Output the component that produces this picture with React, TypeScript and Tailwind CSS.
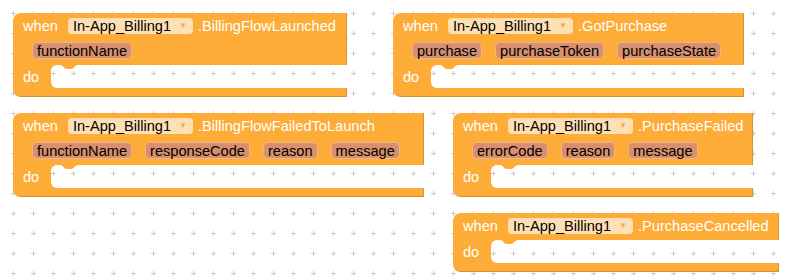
import React from "react";

type EventBlockData = {
  pos: string; // left / top / width, written out in full
  event: string;
  params: string[];
};

const BLOCKS: EventBlockData[] = [
  { pos: "left-[13px] top-[13px] w-[334px]", event: "BillingFlowLaunched", params: ["functionName"] },
  { pos: "left-[393px] top-[13px] w-[351px]", event: "GotPurchase", params: ["purchase", "purchaseToken", "purchaseState"] },
  {
    pos: "left-[13px] top-[113px] w-[411px]",
    event: "BillingFlowFailedToLaunch",
    params: ["functionName", "responseCode", "reason", "message"],
  },
  { pos: "left-[453px] top-[113px] w-[300px]", event: "PurchaseFailed", params: ["errorCode", "reason", "message"] },
  { pos: "left-[453px] top-[213px] w-[326px]", event: "PurchaseCancelled", params: [] },
];

function GridBackground() {
  return (
    <svg className="absolute inset-0" width="789" height="280">
      <defs>
        <pattern id="ws-grid" width="20" height="20" patternUnits="userSpaceOnUse">
          <path d="M11 13.5H16M13.5 11V16" stroke="#cdcdcd" strokeWidth="1" />
        </pattern>
      </defs>
      <rect width="789" height="280" fill="url(#ws-grid)" />
    </svg>
  );
}

function ParamPill({ name }: { name: string }) {
  return (
    <span className="flex h-[17px] items-center rounded-[5px] border-[1.5px] border-[#f0b48c] bg-[#d88f6d] px-[4px] text-black">
      {name}
    </span>
  );
}

function EventBlock({ pos, event, params }: EventBlockData) {
  return (
    <div className={`absolute flex flex-col ${pos}`}>
      {/* header + parameters */}
      <div className="flex flex-col gap-[8px] rounded-tl-[8px] border-r border-[#dc922c] bg-[#feac38] pt-[5px] pb-[6px]">
        <div className="flex h-[16px] items-center pl-[10px] text-white">
          <span>when</span>
          <span className="ml-[10px] flex h-[16px] items-center rounded-[4px] bg-[#ffe0b4] pl-[5px] pr-[6px] text-black">
            In-App_Billing1
            <span className="ml-[8px] text-[8px] text-[#f5a845]">▼</span>
          </span>
          <span className="ml-[5px]">.{event}</span>
        </div>
        {params.length > 0 && (
          <div className="flex h-[17px] gap-[13px] pl-[19px]">
            {params.map((p) => (
              <ParamPill key={p} name={p} />
            ))}
          </div>
        )}
      </div>

      {/* do statement input */}
      <div className="flex h-[23px] overflow-hidden">
        <div className="flex w-[38px] shrink-0 items-center bg-[#feac38] pl-[10px] text-white">do</div>
        <div className="relative flex-1 rounded-l-[6px] shadow-[0_0_0_12px_#feac38]">
          <svg className="absolute top-0 left-[9px]" width="18" height="5" viewBox="0 0 18 5">
            <path d="M0 0C3 0 4 4 7 4L11 4C14 4 15 0 18 0Z" fill="#feac38" />
          </svg>
        </div>
      </div>

      <div className="h-[9px] rounded-bl-[8px] border-r border-b border-[#dc922c] bg-[#feac38]" />
    </div>
  );
}

export default function App() {
  return (
    <div className="relative h-[280px] w-[789px] overflow-hidden bg-white font-['Liberation_Sans',Arial,sans-serif] text-[14.6px] leading-[16px]">
      <GridBackground />
      {BLOCKS.map((b) => (
        <EventBlock key={b.event} {...b} />
      ))}
    </div>
  );
}
